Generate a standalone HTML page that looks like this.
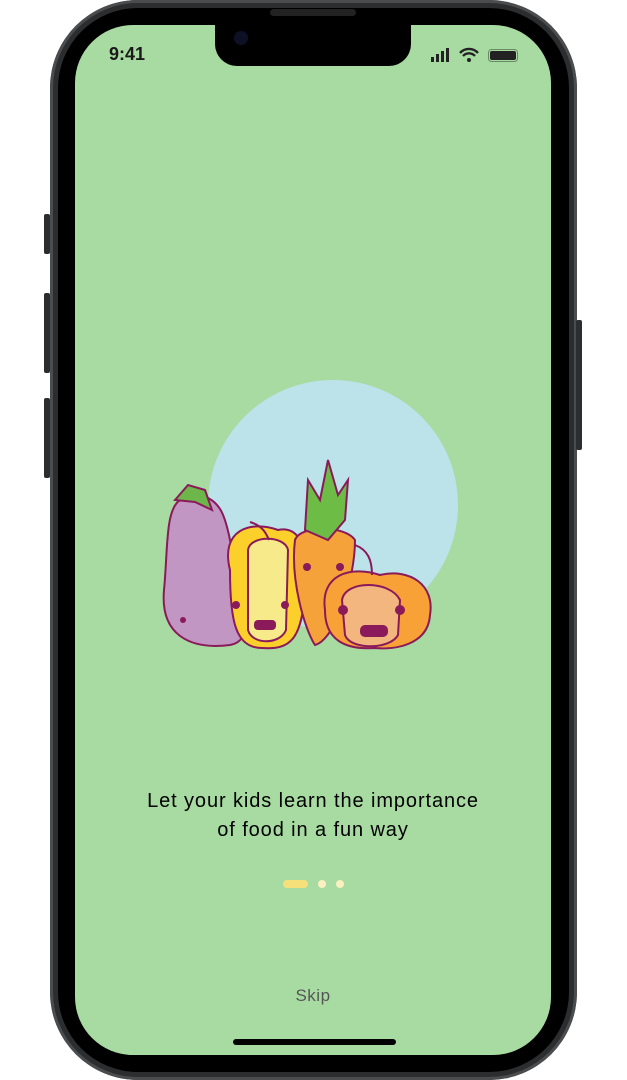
<!DOCTYPE html>
<html><head><meta charset="utf-8"><style>
html,body{margin:0;padding:0;background:#fff;width:627px;height:1080px;overflow:hidden;font-family:"Liberation Sans",sans-serif}
.phone{position:absolute;left:50px;top:0;width:527px;height:1080px;border-radius:88px;background:#2b2d2f;box-shadow:inset 0 0 0 3px #4a4c4e}
.bez{position:absolute;left:58px;top:8px;width:511px;height:1064px;border-radius:80px;background:#000}
.screen{position:absolute;left:75px;top:25px;width:476px;height:1030px;border-radius:58px;background:#a8dba2;overflow:hidden}
.notch{position:absolute;left:215px;top:20px;width:196px;height:46px;background:#000;border-radius:0 0 22px 22px}
.btn{position:absolute;background:#2b2d2f;width:6px;border-radius:2px}
.t{position:absolute;color:#000;text-align:center;width:476px;left:75px;font-size:20px;line-height:29px;letter-spacing:0.9px}
</style></head><body>
<div class="phone"></div>
<div class="btn" style="left:44px;top:214px;height:40px"></div>
<div class="btn" style="left:44px;top:293px;height:80px"></div>
<div class="btn" style="left:44px;top:398px;height:80px"></div>
<div class="btn" style="left:576px;top:320px;height:130px"></div>
<div class="bez"></div>
<div class="screen"></div>
<div class="notch"></div>
<div style="position:absolute;left:270px;top:9px;width:86px;height:7px;border-radius:4px;background:#222"></div>
<div style="position:absolute;left:234px;top:31px;width:14px;height:14px;border-radius:50%;background:#0e1126"></div>
<div style="position:absolute;left:109px;top:44px;font-size:18px;font-weight:bold;color:#1a1a1a">9:41</div>
<svg style="position:absolute;left:430px;top:47px" width="92" height="18">
<rect x="1" y="10" width="3" height="5" fill="#222"/><rect x="6" y="7" width="3" height="8" fill="#222"/><rect x="11" y="4" width="3" height="11" fill="#222"/><rect x="16" y="1" width="3" height="14" fill="#222"/>
<path d="M30 6 a12 12 0 0 1 18 0 M33 9 a8 8 0 0 1 12 0" stroke="#222" stroke-width="2.3" fill="none"/><circle cx="39" cy="13" r="2" fill="#222"/>
<rect x="58.5" y="2.5" width="29" height="12" rx="3" fill="none" stroke="#6a8a66"/><rect x="60" y="4" width="26" height="9" rx="2" fill="#222"/>
</svg>
<div style="position:absolute;left:208px;top:380px;width:250px;height:250px;border-radius:50%;background:#bce2ea"></div>
<svg style="position:absolute;left:150px;top:440px" width="300" height="220" viewBox="0 0 300 220">
<g stroke="#8a1a5a" stroke-width="2">
<path d="M30 60 C15 70 18 110 14 150 C10 195 40 210 80 205 C110 200 90 150 80 100 C75 75 70 60 50 55 Z" fill="#c196c2"/>
<path d="M25 60 L38 45 L55 50 L62 70 L45 62 Z" fill="#6db64a"/>
<path d="M80 130 C70 90 100 80 128 90 C150 85 160 110 155 150 C152 200 140 210 112 208 C85 208 80 180 80 130Z" fill="#fcd02a"/>
<path d="M98 110 C100 95 135 95 138 110 L136 190 C130 205 102 205 98 190Z" fill="#f7ea8a"/>
<path d="M145 100 C150 85 195 85 205 100 C205 140 185 200 165 205 C155 190 140 140 145 100Z" fill="#f6a23a"/>
<path d="M155 90 L158 40 L170 60 L178 20 L188 55 L198 40 L195 80 L178 100 Z" fill="#6cbc46"/>
<path d="M175 170 C170 135 200 125 230 135 C260 128 285 145 280 175 C278 205 245 210 225 208 C195 210 175 200 175 170Z" fill="#f7a136"/>
<path d="M192 160 C195 140 240 140 250 160 L248 195 C240 210 200 210 195 195Z" fill="#f3b67e"/>
<path d="M119 100 C115 90 110 85 100 82 M222 135 C222 120 218 110 205 105" fill="none"/>
</g>
<g fill="#8a1a5a"><circle cx="86" cy="165" r="4"/><circle cx="135" cy="165" r="4"/><circle cx="157" cy="127" r="4"/><circle cx="190" cy="127" r="4"/><circle cx="193" cy="170" r="5"/><circle cx="250" cy="170" r="5"/><circle cx="33" cy="180" r="3"/>
<rect x="104" y="180" width="22" height="10" rx="4"/><rect x="210" y="185" width="28" height="12" rx="5"/></g>
</svg>
<div class="t" style="top:787px">Let your kids learn the importance<br>of food in a fun way</div>
<div style="position:absolute;left:283px;top:880px;width:25px;height:8px;border-radius:4px;background:#f6e07a"></div>
<div style="position:absolute;left:318px;top:880px;width:8px;height:8px;border-radius:50%;background:#fbf0c0"></div>
<div style="position:absolute;left:336px;top:880px;width:8px;height:8px;border-radius:50%;background:#fbf0c0"></div>
<div class="t" style="top:981px;font-size:17px;color:#555;letter-spacing:0.5px">Skip</div>
<div style="position:absolute;left:233px;top:1039px;width:163px;height:6px;border-radius:3px;background:#000"></div>
</body></html>
